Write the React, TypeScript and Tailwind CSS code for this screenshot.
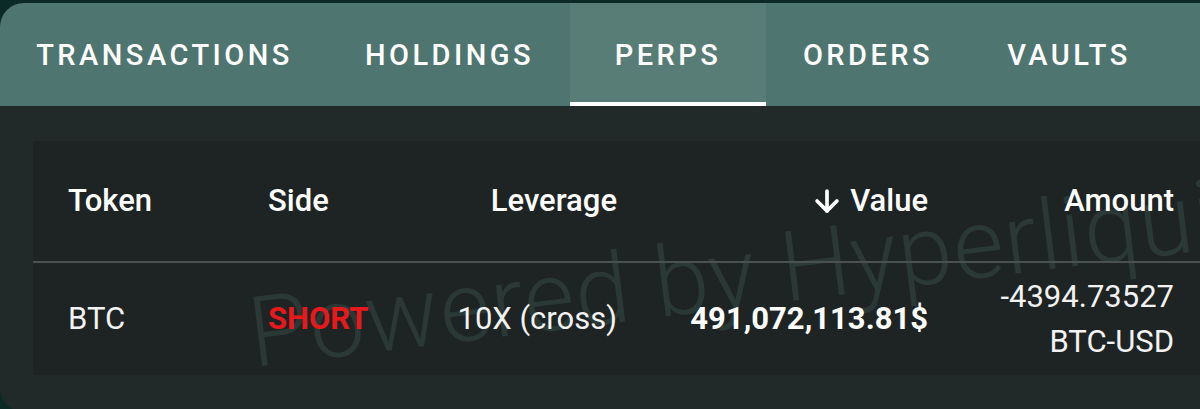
import { ArrowDown } from "lucide-react";

const tabs = [
  { label: "TRANSACTIONS", width: "w-[329px]" },
  { label: "HOLDINGS", width: "w-[241px]" },
  { label: "PERPS", width: "w-[196px]", active: true },
  { label: "ORDERS", width: "w-[204px]" },
  { label: "VAULTS", width: "w-[198px]" },
];

const cols = "grid grid-cols-[200px_150px_199px_311px_246px] items-center";

function TabBar() {
  return (
    <div className="h-[103px] bg-[#4f7570] flex shrink-0">
      {tabs.map((tab) => (
        <div
          key={tab.label}
          className={`relative h-full flex items-center justify-center ${tab.width} ${
            tab.active ? "bg-[#587c76]" : ""
          }`}
        >
          <span className="text-white text-[29px] font-medium tracking-[0.12em] leading-none pt-[2px]">
            {tab.label}
          </span>
          {tab.active && <div className="absolute left-0 right-0 bottom-0 h-[4px] bg-white" />}
        </div>
      ))}
    </div>
  );
}

// faint diagonal watermark behind the table rows
function Watermark() {
  return (
    <div className="pointer-events-none absolute left-[222px] top-[144px] h-[96px] origin-[0_100%] -rotate-[7deg] whitespace-nowrap text-[98px] leading-none font-light tracking-[0.01em] text-[#5a8a82]/20">
      Powered by Hyperliquid
    </div>
  );
}

function PerpsTable() {
  return (
    <div className="relative w-[1200px] bg-[#1e2323] overflow-hidden">
      <Watermark />
      <div className={`relative ${cols} pl-[35px] h-[122px] border-b-2 border-[#4b5151] text-white text-[31px] font-medium`}>
        <span>Token</span>
        <span>Side</span>
        <span className="text-right">Leverage</span>
        <span className="flex items-center justify-end gap-[6px]">
          <ArrowDown size={34} strokeWidth={2.6} />
          Value
        </span>
        <span className="text-right">Amount</span>
      </div>
      <div className={`relative ${cols} pl-[35px] h-[112px] text-[#f2f2f2] text-[31px]`}>
        <span>BTC</span>
        <span className="text-[#e8191c] font-bold">SHORT</span>
        <span className="text-right">10X (cross)</span>
        <span className="text-right font-bold text-white">491,072,113.81$</span>
        <div className="flex flex-col items-end leading-[45px]">
          <span>-4394.73527</span>
          <span>BTC-USD</span>
        </div>
      </div>
    </div>
  );
}

export default function App() {
  return (
    <div className="w-[1200px] h-[409px] overflow-hidden bg-[#0b2925] pt-[3px] font-['Roboto',sans-serif]">
      <div className="w-[1240px] h-[409px] rounded-l-[24px] overflow-hidden bg-[#222929] flex flex-col">
        <TabBar />
        <div className="pt-[35px] pl-[33px]">
          <PerpsTable />
        </div>
      </div>
    </div>
  );
}
